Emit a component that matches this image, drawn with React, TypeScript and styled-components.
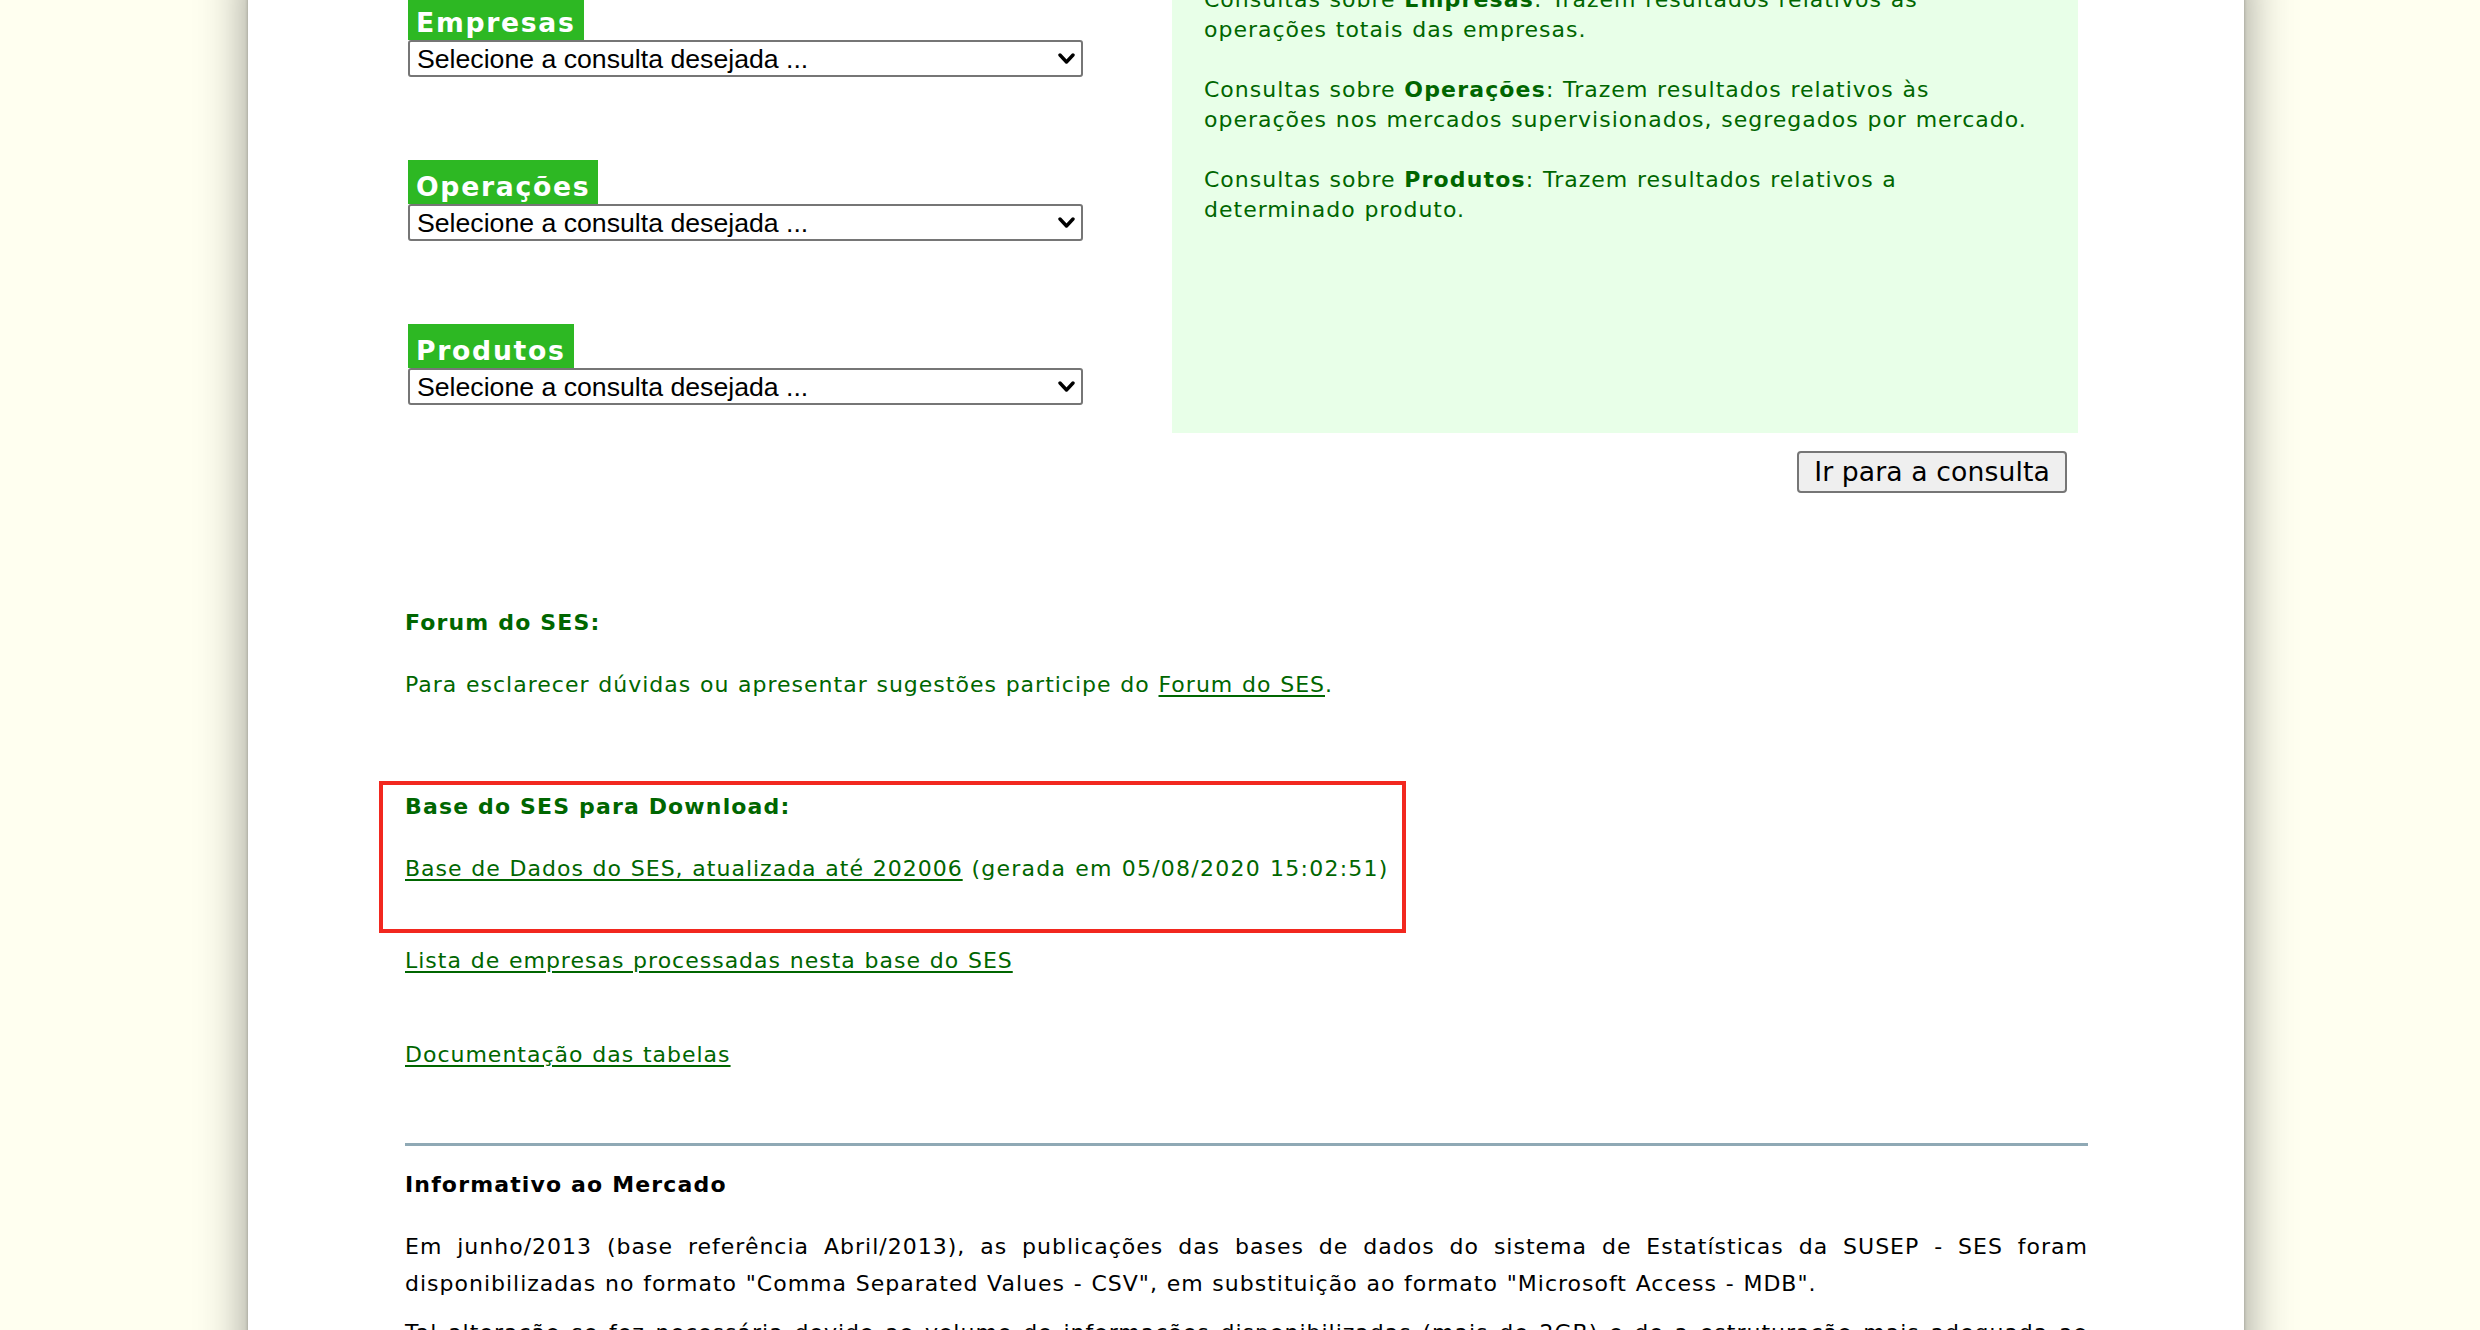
import React from "react";
import styled, { createGlobalStyle } from "styled-components";

const GlobalStyle = createGlobalStyle`
  html, body {
    margin: 0;
    padding: 0;
    background: #fffff0;
  }
  body {
    font-family: "DejaVu Sans", Verdana, sans-serif;
    overflow: hidden;
  }
`;

const Page = styled.div`
  height: 1330px;
  overflow: hidden;
  background: #fffff0;
`;

const Card = styled.main`
  box-sizing: border-box;
  width: 1996px;
  min-height: 1500px;
  margin: -40px 0 0 248px;
  padding: 0 156px 0 157px;
  background: #ffffff;
  box-shadow: 0 0 46px rgba(0, 0, 0, 0.42), 0 0 3px rgba(0, 0, 0, 0.25);
`;

const TopRow = styled.section`
  display: grid;
  grid-template-columns: 675px 906px;
  column-gap: 89px;
  margin-left: 3px;
`;

const LeftCol = styled.div`
  display: flex;
  flex-direction: column;
  gap: 83px;
  padding-top: 36px;
`;

const Block = styled.div`
  display: flex;
  flex-direction: column;
  align-items: flex-start;
`;

const Label = styled.div`
  box-sizing: border-box;
  height: 44px;
  display: flex;
  align-items: flex-end;
  padding: 0 8px 3px 8px;
  background: #2db823;
  color: #ffffff;
  font-family: "DejaVu Sans", Verdana, sans-serif;
  font-weight: bold;
  font-size: 26.67px;
  line-height: 26.67px;
  letter-spacing: 1.7px;
`;

const SelectWrap = styled.div`
  position: relative;
  width: 675px;
  height: 37px;
`;

const Select = styled.select`
  appearance: none;
  -webkit-appearance: none;
  box-sizing: border-box;
  width: 100%;
  height: 100%;
  margin: 0;
  padding: 0 36px 0 7px;
  border: 2px solid #767676;
  border-radius: 3px;
  background: #ffffff;
  color: #000000;
  font-family: "Liberation Sans", Arial, sans-serif;
  font-size: 26.67px;
  outline: none;
`;

const Chevron = styled.svg`
  position: absolute;
  right: 8px;
  top: 12px;
  width: 17px;
  height: 13px;
  pointer-events: none;
`;

const RightCol = styled.div`
  display: flex;
  flex-direction: column;
  align-items: flex-end;
`;

const InfoPanel = styled.div`
  box-sizing: border-box;
  align-self: stretch;
  height: 473px;
  padding: 25px 30px 0 32px;
  background: #e8ffe8;
  color: #006600;
  font-size: 22px;
  line-height: 30px;
  letter-spacing: 1px;
  word-spacing: 0.75px;
`;

const InfoText = styled.p`
  margin: 0 0 30px;
`;

const Strong = styled.b`
  font-weight: bold;
  letter-spacing: 1.15px;
  word-spacing: 0;
`;

const GoButton = styled.button`
  box-sizing: border-box;
  height: 42px;
  margin: 18px 11px 0 0;
  padding: 0 15px;
  border: 2px solid #767676;
  border-radius: 4px;
  background: #efefef;
  color: #000000;
  font-family: "DejaVu Sans", Verdana, sans-serif;
  font-size: 26.67px;
  line-height: 1;
  letter-spacing: 0.1px;
`;

const Heading = styled.p<{ $top: number; $color?: string }>`
  margin: ${(p) => p.$top}px 0 0;
  font-size: 22px;
  line-height: 30px;
  font-weight: bold;
  letter-spacing: 1.15px;
  color: ${(p) => p.$color ?? "#006600"};
`;

const Text = styled.p<{ $top: number }>`
  margin: ${(p) => p.$top}px 0 0;
  font-size: 22px;
  line-height: 30px;
  letter-spacing: 1px;
  word-spacing: 0.75px;
  color: #006600;
`;

const Link = styled.a`
  color: #006600;
  text-decoration: underline;
  text-underline-offset: 3px;
  text-decoration-thickness: 2px;
`;

const Highlight = styled.div`
  box-sizing: border-box;
  width: 1027px;
  margin: 81px 0 0 -26px;
  padding: 7px 0 45px 22px;
  border: 4px solid #f2281f;
`;

const DateNote = styled.span`
  letter-spacing: 1.25px;
`;

const Rule = styled.hr`
  height: 3px;
  margin: 73px 0 0;
  border: 0;
  background: #8fa9b5;
`;

const Paragraph = styled.p<{ $top: number }>`
  margin: ${(p) => p.$top}px 0 0;
  font-size: 22px;
  line-height: 37px;
  letter-spacing: 1px;
  word-spacing: 0.75px;
  color: #000000;
  text-align: justify;
`;

const ChevronIcon = () => (
  <Chevron viewBox="0 0 17 13">
    <polyline
      points="2,3 8.5,10 15,3"
      fill="none"
      stroke="#000"
      strokeWidth="3.4"
      strokeLinecap="round"
      strokeLinejoin="round"
    />
  </Chevron>
);

const categories = ["Empresas", "Operações", "Produtos"];

export default function App() {
  return (
    <Page>
      <GlobalStyle />
      <Card>
        <TopRow>
          <LeftCol>
            {categories.map((c) => (
              <Block key={c}>
                <Label>{c}</Label>
                <SelectWrap>
                  <Select defaultValue="">
                    <option value="">Selecione a consulta desejada ...</option>
                  </Select>
                  <ChevronIcon />
                </SelectWrap>
              </Block>
            ))}
          </LeftCol>
          <RightCol>
            <InfoPanel>
              <InfoText>
                Consultas sobre <Strong>Empresas</Strong>: Trazem resultados relativos às
                operações totais das empresas.
              </InfoText>
              <InfoText>
                Consultas sobre <Strong>Operações</Strong>: Trazem resultados relativos às
                operações nos mercados supervisionados, segregados por mercado.
              </InfoText>
              <InfoText>
                Consultas sobre <Strong>Produtos</Strong>: Trazem resultados relativos a
                determinado produto.
              </InfoText>
            </InfoPanel>
            <GoButton type="button">Ir para a consulta</GoButton>
          </RightCol>
        </TopRow>

        <Heading $top={115}>Forum do SES:</Heading>
        <Text $top={32}>
          Para esclarecer dúvidas ou apresentar sugestões participe do{" "}
          <Link href="#">Forum do SES</Link>.
        </Text>

        <Highlight>
          <Heading $top={0}>Base do SES para Download:</Heading>
          <Text $top={32}>
            <Link href="#">Base de Dados do SES, atualizada até 202006</Link>{" "}
            <DateNote>(gerada em 05/08/2020 15:02:51)</DateNote>
          </Text>
        </Highlight>

        <Text $top={13}>
          <Link href="#">Lista de empresas processadas nesta base do SES</Link>
        </Text>
        <Text $top={64}>
          <Link href="#">Documentação das tabelas</Link>
        </Text>

        <Rule />

        <Heading $top={24} $color="#000000">
          Informativo ao Mercado
        </Heading>
        <Paragraph $top={28}>
          Em junho/2013 (base referência Abril/2013), as publicações das bases de dados do
          sistema de Estatísticas da SUSEP - SES foram disponibilizadas no formato "Comma
          Separated Values - CSV", em substituição ao formato "Microsoft Access - MDB".
        </Paragraph>
        <Paragraph $top={12}>
          Tal alteração se fez necessária devido ao volume de informações disponibilizadas
          (mais de 2GB) e de a estruturação mais adequada ao tratamento dos dados pelos
          usuários, que passam a contar com arquivos mais leves e de fácil manipulação.
        </Paragraph>
      </Card>
    </Page>
  );
}
